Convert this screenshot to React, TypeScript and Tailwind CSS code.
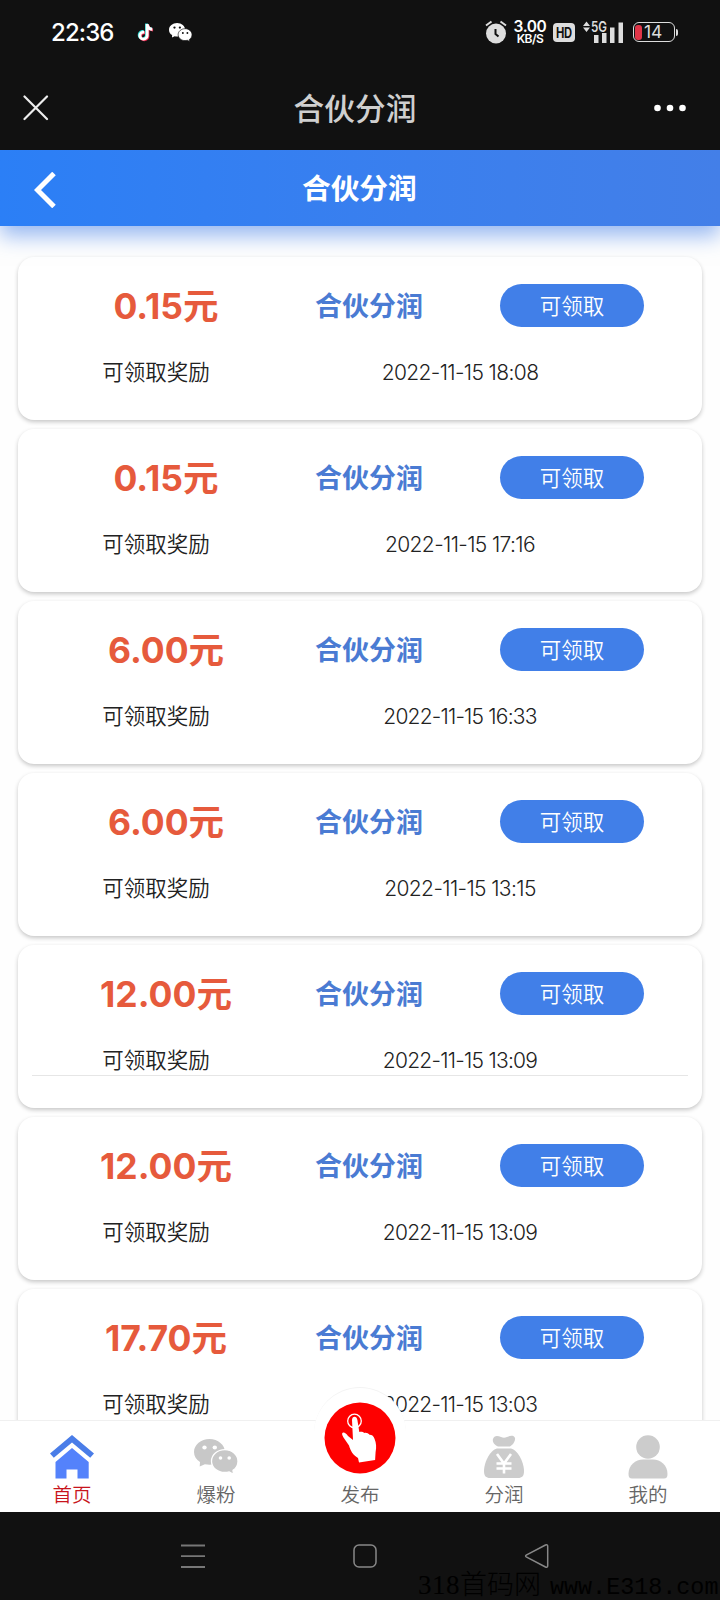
import React from "react";

type Reward = {
  amount: string;
  time: string;
  timeTracking: string;
  divider?: boolean;
};

const rewards: Reward[] = [
  { amount: "0.15", time: "2022-11-15 18:08", timeTracking: "tracking-[-0.62px]" },
  { amount: "0.15", time: "2022-11-15 17:16", timeTracking: "tracking-[-0.62px]" },
  { amount: "6.00", time: "2022-11-15 16:33", timeTracking: "tracking-[-0.8px]" },
  { amount: "6.00", time: "2022-11-15 13:15", timeTracking: "tracking-[-0.62px]" },
  { amount: "12.00", time: "2022-11-15 13:09", timeTracking: "tracking-[-0.75px]", divider: true },
  { amount: "12.00", time: "2022-11-15 13:09", timeTracking: "tracking-[-0.75px]" },
  { amount: "17.70", time: "2022-11-15 13:03", timeTracking: "tracking-[-0.75px]" },
];

const notePath =
  "M8.2 0h3.1c.3 2.4 1.6 3.900 3.900 4.100v3.100c-1.500 0-2.800-.5-3.900-1.200v6c0 3.300-2.500 5.500-5.400 5.500C2.800 17.500.500 15.200.500 12.300c0-3.300 2.900-5.700 6.200-5.200v3.200c-1.700-.5-3.100.5-3.100 2.100 0 1.300 1 2.200 2.300 2.200 1.400 0 2.300-.9 2.300-2.600z";

function WechatIcon({ className, cut }: { className: string; cut: string }) {
  return (
    <svg viewBox="0 0 44 36" className={className} fill="currentColor">
      <path d="M15.500 0C7 0 0 5.700 0 13c0 4.200 2.300 7.600 6 10l-.3 4.500 5.200-2.200c1.500.3 3 .4 4.600.4C24 25.700 31 20 31 13S24 0 15.500 0z" />
      <ellipse cx="10.500" cy="8.500" rx="2.200" ry="2.100" fill={cut} />
      <ellipse cx="20.800" cy="8.500" rx="2.200" ry="2.100" fill={cut} />
      <path
        d="M30.800 10.700C23.500 10.700 17.500 15.800 17.500 22.200s6 11.300 13.300 11.300c1.600 0 3-.2 4.400-.6l4.300 2.300-.5-3.900c3.400-2.200 5-5.400 5-9.100 0-6.400-6-11.500-13.200-11.500z"
        stroke={cut}
        strokeWidth="1.300"
      />
      <circle cx="26.500" cy="19" r="1.800" fill={cut} />
      <circle cx="35.200" cy="19" r="1.800" fill={cut} />
    </svg>
  );
}

function StatusBar() {
  return (
    <div className="flex h-[64px] items-center pr-[42px] pl-[51px] text-white">
      <span className="mt-[2px] w-[64px] text-[24px] leading-8 font-medium tracking-[-0.9px] whitespace-nowrap">22:36</span>
      <svg viewBox="-1 -1 18 20" className="ml-[22px] h-[19px] w-[17px]">
        <path d={notePath} fill="#25d9d5" transform="translate(-.7 -.6)" />
        <path d={notePath} fill="#e8294f" transform="translate(.8 .7)" />
        <path d={notePath} fill="#fff" />
      </svg>
      <WechatIcon className="ml-[15px] h-[19px] w-[23px]" cut="#111" />

      <div className="ml-auto flex items-center">
        <svg viewBox="0 0 22 24" className="h-[24px] w-[22px]">
          <circle cx="11" cy="13.500" r="10" fill="#ddd" />
          <path d="M1 5.500 6.500 1.500M21 5.500 15.500 1.500" stroke="#ddd" strokeWidth="2" />
          <path d="M10.500 9v5l3 2.500" fill="none" stroke="#111" strokeWidth="2" />
        </svg>
        <div className="ml-[6px] flex w-[34px] flex-col items-center">
          <span className="text-[15.500px] leading-[13px] font-semibold tracking-[-0.4px]">3.00</span>
          <span className="text-[12px] leading-[12px] font-semibold tracking-[-0.5px]">KB/S</span>
        </div>
        <div className="ml-[6px] flex h-[19px] w-[22px] items-center justify-center rounded-[4px] bg-[#ddd] text-[14px] font-bold tracking-[-0.500px] text-[#111]">
          <span className="scale-x-[0.8]">HD</span>
        </div>
        <svg viewBox="0 0 42 24" className="ml-[7px] h-[24px] w-[42px] overflow-visible" fill="#ddd">
          <path d="M1 6 4.500 1.500 8 6zM1 7.500h7L4.500 12zM12 15h4.500v8H12zM20 13h4.500v10H20zM28 7.500h4.500V23H28zM36.500 2.500H41V23h-4.500z" />
          <text x="9" y="11.500" fontSize="14" fontWeight="600" textLength="16" lengthAdjust="spacingAndGlyphs">5G</text>
        </svg>
        <div className="ml-[9px] flex h-[20px] w-[42px] items-center rounded-[6px] border-[1.500px] border-[#ddd] p-[1px]">
          <span className="h-[15px] w-[7px] rounded-[3px] bg-[#e03548]" />
          <span className="ml-[2px] text-[17.500px] leading-none text-[#ddd]">14</span>
        </div>
        <span className="ml-[1px] h-[7px] w-[2px] rounded-r bg-[#ddd]" />
      </div>
    </div>
  );
}

function TitleBar() {
  return (
    <div className="flex h-[86px] items-center justify-between pr-[34px] pl-[23px]">
      <svg viewBox="0 0 26 26" className="mt-[1px] h-[26px] w-[26px]">
        <path d="M1.500 1.500 24 24M24 1.500 1.500 24" stroke="#eee" strokeWidth="2.200" strokeLinecap="round" />
      </svg>
      <h1 className="mt-[5px] ml-[7px] text-[30.700px] leading-none font-medium text-[#cfcfcf]">合伙分润</h1>
      <svg viewBox="0 0 32 8" className="mt-[1px] h-[8px] w-[32px]" fill="#fff">
        <circle cx="3.500" cy="4" r="3.300" />
        <circle cx="16" cy="4" r="3.300" />
        <circle cx="28.500" cy="4" r="3.300" />
      </svg>
    </div>
  );
}

function PageHeader() {
  return (
    <div className="relative flex h-[76px] shrink-0 items-center bg-linear-to-r from-[#2b7ff6] to-[#437fe8] pl-[34px] shadow-[0_10px_20px_rgba(67,127,232,0.55)]">
      <svg viewBox="0 0 22 36" className="mt-[4px] h-[36px] w-[22px]">
        <path d="M20 1.500 3.500 18 20 34.500" fill="none" stroke="#fff" strokeWidth="5" />
      </svg>
      <h2 className="mt-[2px] ml-[246px] text-[28.700px] leading-none font-bold text-white">合伙分润</h2>
    </div>
  );
}

function RewardCard({ reward }: { reward: Reward }) {
  return (
    <div className="flex h-[163px] shrink-0 flex-col rounded-[16px] bg-white pt-[27px] shadow-[0_2px_4px_rgba(0,0,0,0.22)]">
      <div className="flex h-[43px] items-center">
        <div className="flex w-[296px] items-baseline justify-center pt-[2px] text-[35.500px] leading-[43px] font-bold text-[#e65a3c]">
          <span>{reward.amount}</span>
          <span>元</span>
        </div>
        <div className="w-[110px] pt-[2px] text-center text-[27px] leading-[43px] font-bold whitespace-nowrap text-[#4a7bd3]">合伙分润</div>
        <button className="ml-[76px] h-[43px] w-[144px] rounded-full bg-[#417fe8] pt-[1px] text-[21.500px] leading-[42px] font-[350] text-white">可领取</button>
      </div>
      <div className="mt-[30px] flex h-[30px] items-center text-[#222]">
        <span className="w-[276px] text-center text-[21.500px] font-[350]">可领取奖励</span>
        <span className={`w-[332px] pt-[2px] text-center text-[21px] font-[350] ${reward.timeTracking}`}>{reward.time}</span>
      </div>
      {reward.divider && <div className="mx-[14px] h-px bg-[#e6e6e6]" />}
    </div>
  );
}

function HomeIcon() {
  return (
    <svg viewBox="0 0 44 44" className="h-[44px] w-[44px]">
      <path d="M0 18.500 22 0l22 18.500-3.800 4.200L22 7.500 3.800 22.700z" fill="#4a7de8" />
      <path d="M22 13 38.700 27v16.500H27.500v-9h-11v9H5.500V27z" fill="#5482fb" />
    </svg>
  );
}

function BagIcon() {
  return (
    <svg viewBox="0 0 42 44" className="h-[44px] w-[42px]">
      <path d="M10 4c1-4 5-3.500 8-2 2 1 4 1 6 0 3-1.500 7-2 8 1 .5 3-2 7-5 8.500H15c-3-1-6-4.500-5-7.500z" fill="#ccc" />
      <path d="M14 13.500h14c8 2 13 15.500 13 22.500 0 5-2 7-6 7H7c-4 0-6-2-6-7 0-7 5-20.500 13-22.500z" fill="#ccc" />
      <path d="M14 19l7 9.500L28 19M21 28v10.500M13.500 28.500h15M13.500 33.500h15" fill="none" stroke="#fff" strokeWidth="2.600" />
    </svg>
  );
}

function UserIcon() {
  return (
    <svg viewBox="0 0 40 44" className="h-[44px] w-[40px]" fill="#ccc">
      <circle cx="20" cy="12" r="11.800" />
      <path d="M.500 39C.500 30 7.500 24.500 15 24.500h10c7.500 0 14.500 5.500 14.500 14.500 0 3-1 4.500-3.500 4.500H4c-2.500 0-3.500-1.500-3.500-4.500z" />
    </svg>
  );
}

function TapIcon() {
  return (
    <svg viewBox="0 0 92 92" className="h-[92px] w-[92px]">
      <circle cx="46" cy="50" r="35.500" fill="#fe0000" />
      <circle cx="40.500" cy="33" r="6.800" fill="none" stroke="#fff" strokeWidth="1.300" />
      <path
        d="M38 32c0-4.500 5-4.500 5.400 0l1.900 12c2-.6 4 0 5 1 2-.5 4 .3 5.300 1.800 2.500 0 4.200 1.500 5 4.200 1.600 4 2 8 1 13l-.5 8-16.100 2.500-1-4.500c-5-3-7.500-7-9-12.500l-5.500-8c-1.500-2.500-1.800-4.300-.8-4.800 1.600-.7 3.600 1 5.300 3.300l5 4z"
        fill="#fff"
      />
    </svg>
  );
}

function TabItem({ label, active, children }: { label: string; active?: boolean; children: React.ReactNode }) {
  return (
    <div className="flex flex-1 flex-col items-center">
      <div className="flex h-[44px] items-end justify-center">{children}</div>
      <span className={`mt-[4px] text-[19.500px] leading-[25px] font-[350] ${active ? "text-[#c8141c]" : "text-[#666]"}`}>{label}</span>
    </div>
  );
}

function TabBar() {
  return (
    <nav className="relative flex h-[92px] shrink-0 border-t border-[#f0f0f0] bg-white pt-[14px]">
      <TabItem label="首页" active>
        <HomeIcon />
      </TabItem>
      <TabItem label="爆粉">
        <WechatIcon className="mb-[4px] h-[36px] w-[44px] text-[#c8c8c8]" cut="#fff" />
      </TabItem>
      <TabItem label="发布">
        <span className="relative h-[92px] w-[92px] shrink-0 rounded-full border-t border-[#f3f3f3] bg-white">
          <TapIcon />
        </span>
      </TabItem>
      <TabItem label="分润">
        <BagIcon />
      </TabItem>
      <TabItem label="我的">
        <UserIcon />
      </TabItem>
    </nav>
  );
}

function SystemNav() {
  return (
    <div className="flex h-[88px] shrink-0 flex-col overflow-hidden bg-[#111]">
      <div className="flex h-[57px] shrink-0 items-end pl-[180px]">
        <svg viewBox="0 0 26 26" className="h-[26px] w-[26px]" stroke="#777" strokeWidth="1.800">
          <path d="M1 2.500h24M1 13.200h24M1 24h24" />
        </svg>
        <svg viewBox="0 0 26 26" className="ml-[146px] h-[26px] w-[26px]" fill="none" stroke="#888" strokeWidth="1.500">
          <rect x="2" y="2" width="22" height="22" rx="5" />
        </svg>
        <svg viewBox="0 0 26 26" className="ml-[146px] h-[26px] w-[26px]" fill="none" stroke="#888" strokeWidth="1.500" strokeLinejoin="round">
          <path d="M2.200 12.200 21.500 2c1.200-.6 2.200 0 2.200 1.300v19.400c0 1.300-1 1.900-2.200 1.300L2.200 13.800c-.8-.5-.8-1.100 0-1.600z" />
        </svg>
      </div>
      <div className="flex h-[31px] shrink-0 items-baseline pl-[418px] text-[27px] leading-[31px] whitespace-nowrap text-black">
        <span className="font-['Liberation_Serif',serif] tracking-[0.500px]">318</span>
        <span className="font-light">首码网</span>
        <span className="ml-[9px] font-['Liberation_Mono',monospace] text-[23.400px]">www.E318.com</span>
      </div>
    </div>
  );
}

export default function App() {
  return (
    <div className="flex h-[1600px] w-[720px] flex-col overflow-hidden bg-[#111] font-['Inter','Noto_Sans_CJK_SC',sans-serif]">
      <header className="h-[150px] shrink-0">
        <StatusBar />
        <TitleBar />
      </header>
      <main className="flex min-h-0 flex-1 flex-col overflow-hidden bg-[#fefefe]">
        <PageHeader />
        <div className="flex min-h-0 flex-1 flex-col gap-[9px] px-[18px] pt-[31px]">
          {rewards.map((reward, i) => (
            <RewardCard key={i} reward={reward} />
          ))}
        </div>
      </main>
      <TabBar />
      <SystemNav />
    </div>
  );
}
